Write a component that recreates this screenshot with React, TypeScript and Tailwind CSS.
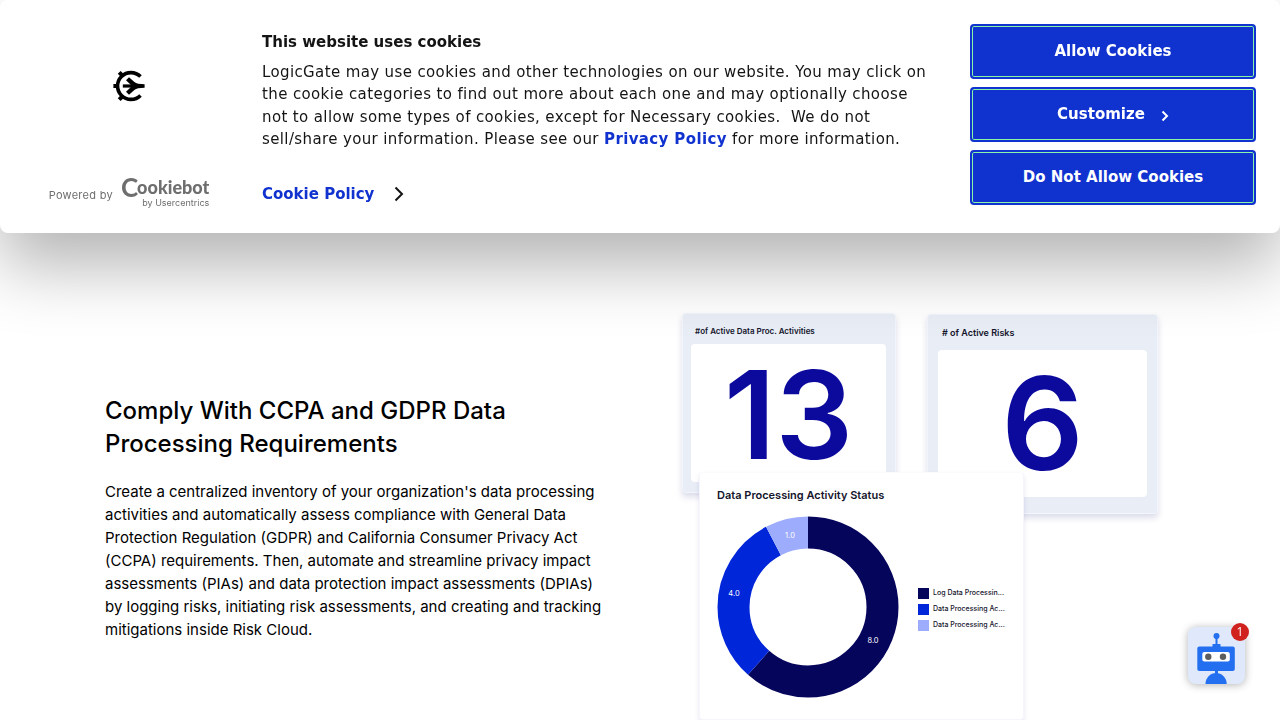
import React from "react";

function GateLogo() {
  return (
    <svg viewBox="0 0 32 32" className="h-8 w-8" role="img" aria-label="LogicGate" fill="none" stroke="#000">
      <path d="M27.5 6.6A13.4 13.4 0 1 0 27.5 25.4" strokeWidth="3.6" />
      <path d="M0.4 16H5M6.2 2.4L9.8 6M6.2 29.6L9.8 26" strokeWidth="4" />
      <path d="M9.8 16H28" strokeWidth="3.2" />
      <path
        d="M16 7.2L21.4 12Q24 14.2 31.6 14.2V17.8Q24 17.8 21.4 20L16 24.8L13 21.8L19 16L13 10.2Z"
        fill="#000"
        stroke="none"
      />
    </svg>
  );
}

function ConsentButton({ children }: { children: React.ReactNode }) {
  return (
    <button
      type="button"
      className="flex h-[55px] w-full items-center justify-center rounded border-2 border-[#1032cf] bg-[#1032cf] text-[15px] font-bold text-white shadow-[inset_0_0_0_1px_#8af5a6]"
    >
      {children}
    </button>
  );
}

function CookieBanner() {
  return (
    <section
      role="dialog"
      aria-label="Cookie consent"
      className="fixed inset-x-0 top-0 z-20 flex h-[233px] rounded-lg bg-white font-['DejaVu_Sans',sans-serif] text-[15px] text-[#141414] shadow-[0_32px_68px_rgba(0,0,0,0.3)]"
    >
      <div className="flex w-[262px] shrink-0 flex-col items-center justify-between pt-[70px] pr-1 pb-6">
        <GateLogo />
        <a href="#cookiebot" className="flex items-end gap-2 text-[#6e6e6e]">
          <span className="pb-[6px] font-[Inter,sans-serif] text-[11px] leading-4 tracking-wide">Powered by</span>
          <span className="flex flex-col items-end">
            <span className="flex items-center font-[Lato,sans-serif] text-[18px] leading-5 font-black">
              <span className="-mr-px text-[26px] leading-5 font-bold">C</span>ookiebot
            </span>
            <span className="font-[Inter,sans-serif] text-[9px] leading-3">by Usercentrics</span>
          </span>
        </a>
      </div>
      <div className="min-w-0 flex-1 pt-[31px]">
        <h2 className="leading-normal font-bold">This website uses cookies</h2>
        <p className="mt-[7px] leading-normal tracking-wide">
          LogicGate may use cookies and other technologies on our website. You may click on the cookie categories to
          find out more about each one and may optionally choose not to allow some types of cookies, except for
          Necessary cookies.&nbsp; We do not sell/share your information. Please see our{" "}
          <a href="#privacy" className="font-bold text-[#1032cf]">
            Privacy Policy
          </a>{" "}
          for more information.
        </p>
        <a href="#cookie-policy" className="mt-8 flex items-center gap-[20px] leading-normal font-bold text-[#1032cf]">
          Cookie Policy
          <svg viewBox="0 0 10 16" className="h-4 w-[10px]" fill="none" stroke="#141414" strokeWidth="2">
            <path d="M1.5 1.5L8 8L1.5 14.5" />
          </svg>
        </a>
      </div>
      <div className="mr-6 ml-8 flex w-[286px] shrink-0 flex-col gap-2 pt-6">
        <ConsentButton>Allow Cookies</ConsentButton>
        <ConsentButton>
          Customize
          <svg viewBox="0 0 8 12" className="mt-0.5 ml-4 h-3 w-2" fill="none" stroke="#fff" strokeWidth="2">
            <path d="M1.5 1.5L6 6L1.5 10.5" />
          </svg>
        </ConsentButton>
        <ConsentButton>Do Not Allow Cookies</ConsentButton>
      </div>
    </section>
  );
}

const legend = [
  { label: "Log Data Processin...", swatch: "bg-[#06055c]" },
  { label: "Data Processing Ac...", swatch: "bg-[#0026d9]" },
  { label: "Data Processing Ac...", swatch: "bg-[#9dacfd]" },
];

function StatusDonut() {
  return (
    <svg viewBox="0 0 182 182" className="h-[182px] w-[182px] shrink-0" role="img" aria-label="Activity status chart">
      <g transform="rotate(-90 91 91)" fill="none" strokeWidth="32">
        <circle cx="91" cy="91" r="74.5" stroke="#06055c" pathLength="13" strokeDasharray="8 5" />
        <circle cx="91" cy="91" r="74.5" stroke="#0026d9" pathLength="13" strokeDasharray="4 9" strokeDashoffset="-8" />
        <circle cx="91" cy="91" r="74.5" stroke="#9dacfd" pathLength="13" strokeDasharray="1 12" strokeDashoffset="-12" />
      </g>
      <g fill="#fff" fontFamily="Inter, sans-serif" fontSize="7.5" textAnchor="middle">
        <text x="73" y="22">1.0</text>
        <text x="17" y="80">4.0</text>
        <text x="156" y="127">8.0</text>
      </g>
    </svg>
  );
}

function DashboardCollage() {
  return (
    <div className="w-[510px] pb-0.5 font-[Inter,sans-serif] text-[#14142b]">
      <div className="flex h-[160px] items-start gap-[31px] pl-[17px]">
        <div className="mt-px h-[180px] w-[214px] shrink-0 rounded border border-[#f2f5fb] bg-[#e8edf6] px-2 pt-2 shadow-[0_4px_6px_rgba(60,60,140,0.18)]">
          <h4 className="px-1 text-[8px] leading-[18px] font-semibold">#of Active Data Proc. Activities</h4>
          <div className="mt-1 h-[138px] w-[195px] rounded bg-white text-center text-[122px] leading-[142px] font-semibold text-[#0c0a9d]">
            13
          </div>
        </div>
        <div className="mt-[2px] h-[200px] w-[231px] shrink-0 rounded border border-[#f2f5fb] bg-[#e8edf6] px-[10px] pt-[9px] shadow-[0_4px_6px_rgba(60,60,140,0.18)]">
          <h4 className="px-1 text-[9px] leading-[18px] font-semibold"># of Active Risks</h4>
          <div className="mt-2 h-[147px] w-[209px] rounded bg-white text-center text-[129px] leading-[147px] font-semibold text-[#0c0a9d]">
            6
          </div>
        </div>
      </div>
      <div className="relative ml-[34px] h-[248px] w-[325px] rounded-sm border border-[#f5f6fb] border-t-[#fbfbfe] bg-white px-[17px] pt-[14px] shadow-[0_3px_5px_rgba(60,60,140,0.12)]">
        <h4 className="text-[11px] leading-4 font-semibold">Data Processing Activity Status</h4>
        <div className="mt-[13px] flex items-center gap-[19px]">
          <StatusDonut />
          <ul className="flex flex-col gap-1 pt-1">
            {legend.map((item, index) => (
              <li key={index} className="flex items-center gap-1 text-[7px] leading-3 font-medium whitespace-nowrap">
                <span className={`h-[11px] w-[11px] ${item.swatch}`} />
                {item.label}
              </li>
            ))}
          </ul>
        </div>
      </div>
    </div>
  );
}

function ChatLauncher() {
  return (
    <button
      type="button"
      aria-label="Open chat, 1 new message"
      className="fixed right-[35px] bottom-[36px] z-10 h-[57px] w-[57px] rounded-lg bg-[#dfe9fb] shadow-[0_1px_8px_rgba(0,0,0,0.3)]"
    >
      <svg viewBox="0 0 57 57" className="h-full w-full rounded-lg" fill="#236ff0">
        <circle cx="28.500" cy="9" r="3" />
        <rect x="27.500" y="11" width="2" height="8" />
        <rect x="24.500" y="17" width="8" height="4" rx="0.5" />
        <rect x="9.300" y="19.500" width="37.500" height="24.500" rx="2" />
        <rect x="27" y="43" width="3" height="4" />
        <path d="M17.500 57a10.600 11 0 0 1 21.200 0z" />
        <rect x="14.300" y="25" width="27.500" height="9.500" rx="2" fill="#fff" />
        <circle cx="20.300" cy="29.800" r="3.200" fill="#5d5d5d" />
        <circle cx="35" cy="29.800" r="3.200" fill="#5d5d5d" />
      </svg>
      <span className="absolute -top-1 -right-1 flex h-[18px] w-[18px] items-center justify-center rounded-full bg-[#d0211c] font-['Open_Sans',sans-serif] text-xs leading-none text-white">
        1
      </span>
    </button>
  );
}

export default function App() {
  return (
    <div className="min-h-screen overflow-hidden bg-white">
      <CookieBanner />
      <main className="mx-auto grid max-w-[1070px] grid-cols-2 items-center gap-[50px] pt-[312px]">
        <article className="pr-1 font-[Inter,sans-serif] text-black">
          <h3 className="text-2xl leading-[33px] font-medium">Comply With CCPA and GDPR Data Processing Requirements</h3>
          <p className="mt-5 text-[15px] leading-[23px]">
            Create a centralized inventory of your organization's data processing activities and automatically assess
            compliance with General Data Protection Regulation (GDPR) and California Consumer Privacy Act (CCPA)
            requirements. Then, automate and streamline privacy impact assessments (PIAs) and data protection impact
            assessments (DPIAs) by logging risks, initiating risk assessments, and creating and tracking mitigations
            inside Risk Cloud.
          </p>
        </article>
        <DashboardCollage />
      </main>
      <ChatLauncher />
    </div>
  );
}
